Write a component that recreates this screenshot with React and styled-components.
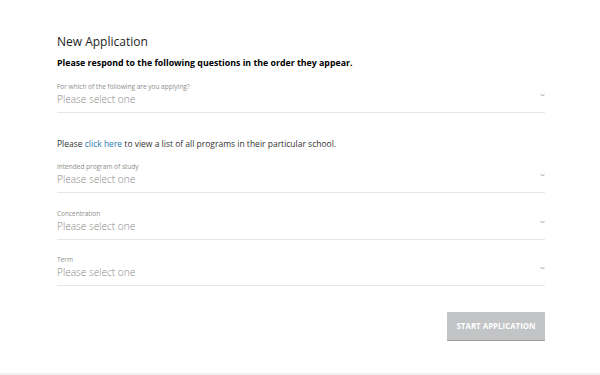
import React from "react";
import styled, { createGlobalStyle } from "styled-components";

const Global = createGlobalStyle`
  html, body { margin: 0; padding: 0; background: #fff; }
  body { font-family: "Open Sans", "Liberation Sans", sans-serif; }
`;

const Page = styled.div`
  width: 600px;
  height: 375px;
  box-sizing: border-box;
  border-bottom: 2px solid #f2f2f2;
  padding: 34px 55px 0 57px;
`;

const Title = styled.h1`
  margin: 0;
  font-size: 12px;
  font-weight: 400;
  color: #1e1e1e;
  line-height: 16px;
`;

const Intro = styled.p`
  margin: 7px 0 0;
  font-size: 8.8px;
  font-weight: 700;
  color: #000;
  line-height: 12px;
`;

const Field = styled.div`
  position: relative;
  margin-top: ${(p) => p.$top}px;
  border-bottom: 1px solid #e6e6e6;
  padding-bottom: 6px;
`;

const Label = styled.div`
  font-size: 6.5px;
  font-weight: 400;
  color: #8c8c8c;
  line-height: 10px;
`;

const Value = styled.div`
  font-size: 10.1px;
  font-weight: 300;
  color: #888;
  line-height: 14px;
`;

const Chevron = styled.svg`
  position: absolute;
  right: 0;
  top: 11px;
  width: 5px;
  height: 4px;
`;

const Note = styled.p`
  margin: 25px 0 0;
  font-size: 8.5px;
  color: #333;
  line-height: 12px;
`;

const Link = styled.a`
  color: #2a7ab0;
  text-decoration: none;
`;

const Actions = styled.div`
  display: flex;
  justify-content: flex-end;
  margin-top: 26px;
`;

const Button = styled.button`
  width: 98px;
  height: 28px;
  border: none;
  border-radius: 1px;
  background: #c2c4c6;
  box-shadow: 0 1px 0 #9a9c9e;
  color: #fff;
  font-family: "Open Sans", "Liberation Sans", sans-serif;
  font-weight: 700;
  font-size: 7.9px;
  text-transform: uppercase;
  padding: 0;
`;

const Select = ({ label, top }) => (
  <Field $top={top}>
    <Label>{label}</Label>
    <Value>Please select one</Value>
    <Chevron viewBox="0 0 5 4">
      <path d="M0.5 1 L2.5 3 L4.5 1" fill="none" stroke="#999" strokeWidth="0.9" />
    </Chevron>
  </Field>
);

export default function App() {
  return (
    <>
      <Global />
      <Page>
        <Title>New Application</Title>
        <Intro>Please respond to the following questions in the order they appear.</Intro>
        <Select top={13} label="For which of the following are you applying?" />
        <Note>
          Please <Link href="#">click here</Link> to view a list of all programs in their particular school.
        </Note>
        <Select top={12} label="Intended program of study" />
        <Select top={16} label="Concentration" />
        <Select top={15} label="Term" />
        <Actions>
          <Button>Start Application</Button>
        </Actions>
      </Page>
    </>
  );
}
